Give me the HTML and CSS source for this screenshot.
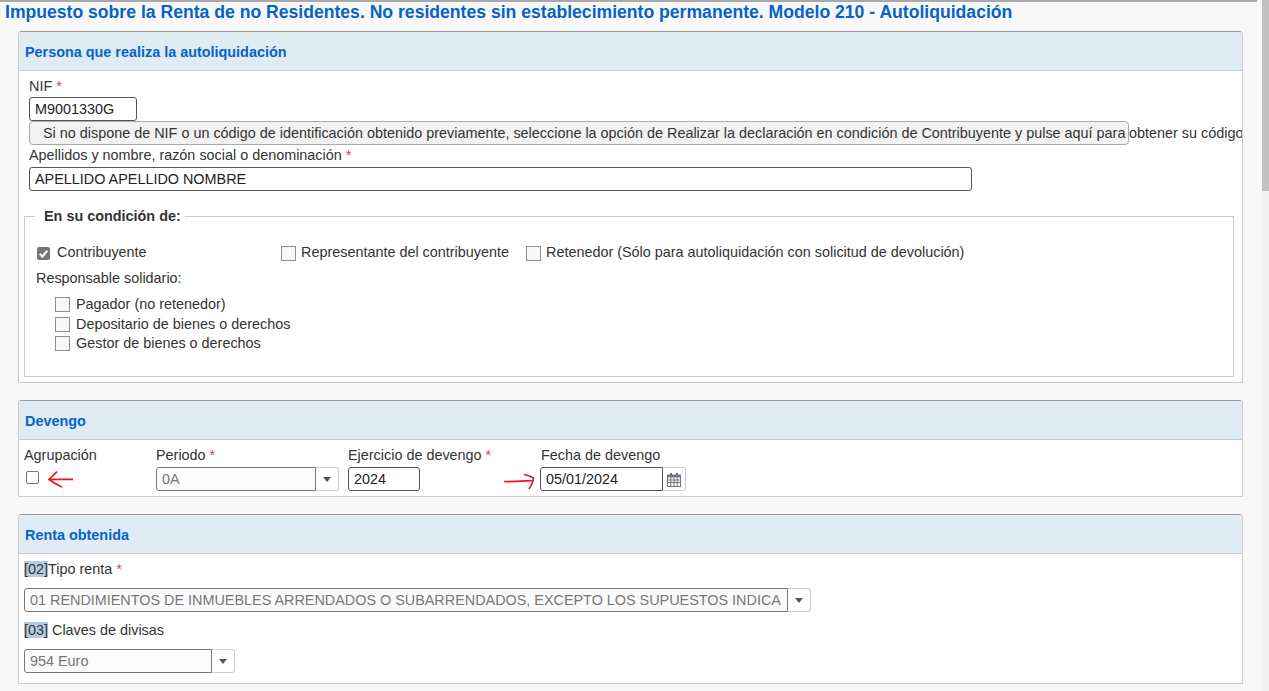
FILE: index.html
```html
<!DOCTYPE html>
<html lang="es">
<head>
  <meta charset="UTF-8">
  <title>Modelo 210 - Autoliquidación</title>
  <link rel="stylesheet" href="styles.css">
</head>
<body>
  <div class="page">
    <main class="content">
      <h1>Impuesto sobre la Renta de no Residentes. No residentes sin establecimiento permanente. Modelo 210 - Autoliquidación</h1>

      <!-- Persona -->
      <section class="panel panel-persona">
        <h2>Persona que realiza la autoliquidación</h2>
        <div class="panel-body body-persona">
          <label class="lbl">NIF <span class="req">*</span></label>
          <div class="text-input nif">M9001330G</div>
          <div class="nif-help">
            <button class="help-btn">Si no dispone de NIF o un código de identificación obtenido previamente, seleccione la opción de Realizar la declaración en condición de Contribuyente y pulse aquí para</button><span>obtener su código</span>
          </div>
          <label class="lbl lbl-name">Apellidos y nombre, razón social o denominación <span class="req">*</span></label>
          <div class="text-input name">APELLIDO APELLIDO NOMBRE</div>

          <fieldset class="condicion">
            <legend>En su condición de:</legend>
            <div class="cond-row">
              <span class="check-item item-contrib"><span class="cb cb-on"><svg viewBox="0 0 13 13" width="13" height="13"><path d="M2.8 6.8 5.4 9.6 10.2 3.6" fill="none" stroke="#fff" stroke-width="2.2"/></svg></span>Contribuyente</span>
              <span class="check-item item-repre"><span class="cb"></span>Representante del contribuyente</span>
              <span class="check-item"><span class="cb"></span>Retenedor (Sólo para autoliquidación con solicitud de devolución)</span>
            </div>
            <p class="resp">Responsable solidario:</p>
            <div class="resp-list">
              <span class="check-item"><span class="cb"></span>Pagador (no retenedor)</span>
              <span class="check-item"><span class="cb"></span>Depositario de bienes o derechos</span>
              <span class="check-item"><span class="cb"></span>Gestor de bienes o derechos</span>
            </div>
          </fieldset>
        </div>
      </section>

      <!-- Devengo -->
      <section class="panel panel-devengo">
        <h2>Devengo</h2>
        <div class="panel-body body-devengo">
          <div class="col col-agr">
            <label class="lbl">Agrupación</label>
            <div class="agr-row">
              <span class="cb-small"></span>
              <svg class="arrow-left" width="28" height="18" viewBox="0 0 28 18"><path d="M26 9.300C18 9.500 9 9.200 2 9.500M10 1.700 2 9.500C6 12 10 15 15 17" fill="none" stroke="#f5101a" stroke-width="1.700"/></svg>
            </div>
          </div>
          <div class="col col-periodo">
            <label class="lbl lbl-field">Periodo <span class="req">*</span></label>
            <div class="combo combo-periodo"><span class="combo-text">0A</span><span class="combo-btn"><i class="caret"></i></span></div>
          </div>
          <div class="col col-ejer">
            <label class="lbl lbl-field">Ejercicio de devengo <span class="req">*</span></label>
            <div class="text-input ejer">2024</div>
          </div>
          <svg class="arrow-right" width="32" height="20" viewBox="0 0 32 20"><path d="M1 10.500C10 10.800 20 10 30.500 9.500M21 3.500C25 4 28 5.500 30.500 7 30 12 28 15 26 18" fill="none" stroke="#f5101a" stroke-width="1.700"/></svg>
          <div class="col col-fecha">
            <label class="lbl lbl-field lbl-fecha">Fecha de devengo</label>
            <div class="date-group">
              <div class="text-input fecha">05/01/2024</div>
              <span class="cal-btn">
                <svg width="14" height="15" viewBox="0 0 14 15"><path d="M0 2.500h14v12.500H0z" fill="#6f7480"/><path d="M1 5.500h12v8.500H1z" fill="#fff"/><path d="M3 1h2v3H3zM9 1h2v3H9z" fill="#6f7480"/><path d="M1 8h12M1 10.500h12M3.800 5.500v9M7 5.500v9M10.200 5.500v9" stroke="#6f7480" fill="none"/></svg>
              </span>
            </div>
          </div>
        </div>
      </section>

      <!-- Renta -->
      <section class="panel panel-renta">
        <h2>Renta obtenida</h2>
        <div class="panel-body body-renta">
          <label class="lbl"><mark>[02]</mark>Tipo renta <span class="req">*</span></label>
          <div class="combo combo-tipo"><span class="combo-text">01 RENDIMIENTOS DE INMUEBLES ARRENDADOS O SUBARRENDADOS, EXCEPTO LOS SUPUESTOS INDICA</span><span class="combo-btn"><i class="caret"></i></span></div>
          <label class="lbl lbl-divisa"><mark>[03]</mark> Claves de divisas</label>
          <div class="combo combo-divisa"><span class="combo-text">954 Euro</span><span class="combo-btn"><i class="caret"></i></span></div>
        </div>
      </section>
    </main>
    <div class="scrollbar"><div class="thumb"></div></div>
  </div>
</body>
</html>
```
FILE: styles.css
```css
html, body {
  margin: 0;
  height: 691px;
  overflow: hidden;
}
body {
  font-family: "Liberation Sans", Arial, sans-serif;
  font-size: 14.4px;
  color: #333;
  background: #f8f8f8;
}
.page {
  display: flex;
  height: 691px;
}
.content {
  width: 1262px;
  flex: none;
}
.scrollbar {
  width: 7px;
  background: #f1f1f1;
}
.thumb {
  height: 191px;
  background: #c1c1c1;
}
h1 {
  margin: 0;
  height: 31px;
  width: 1257px;
  box-sizing: border-box;
  border-top: 2px solid #a9a9a9;
  padding-left: 5px;
  font-size: 17.6px;
  line-height: 21px;
  font-weight: bold;
  color: #0563c9;
  white-space: nowrap;
}

/* paneles */
.panel {
  width: 1225px;
  margin-left: 18px;
  box-sizing: border-box;
  background: #fff;
  border: 1px solid #ccc;
  border-top-color: #999;
  border-radius: 4px 4px 0 0;
  overflow: hidden;
}
.panel h2 {
  margin: 0;
  height: 39px;
  box-sizing: border-box;
  padding-left: 6px;
  background: #e0ecf4;
  border-bottom: 1px solid #ccc;
  font-size: 14.4px;
  line-height: 41px;
  color: #0563c9;
}
.panel-persona { height: 352px; }
.panel-devengo { height: 97px; margin-top: 17px; }
.panel-renta { height: 170px; margin-top: 17px; }
.panel-body { box-sizing: border-box; }
.body-persona { padding: 6px 0 0 10px; }

.lbl {
  display: block;
  line-height: 19px;
  color: #333;
}
.req { color: #d2444e; }
mark {
  background: #b5cde2;
  color: #333;
}

.text-input {
  box-sizing: border-box;
  height: 24px;
  border: 1px solid #555;
  border-radius: 3px;
  background: #fff;
  padding-left: 5px;
  line-height: 23px;
  color: #222;
}
.nif { width: 108px; margin-top: 1px; }
.name { width: 943px; }
.ejer { width: 72px; }
.fecha { width: 123px; border-radius: 3px 0 0 3px; }

.nif-help {
  display: flex;
  align-items: center;
  height: 24px;
  white-space: nowrap;
}
.help-btn {
  flex: none;
  width: 1100px;
  height: 24px;
  box-sizing: border-box;
  padding: 0 0 0 13px;
  overflow: hidden;
  white-space: nowrap;
  text-align: left;
  border: 1px solid #aaa;
  border-radius: 4px;
  background: #f2f2f2;
  font: inherit;
  color: #333;
}
.lbl-name { margin-top: 1px; margin-bottom: 2px; }

/* condicion */
.condicion {
  margin: 17px 0 0 -5px;
  width: 1210px;
  height: 169px;
  box-sizing: border-box;
  border: 1px solid #ccc;
  padding: 18px 0 0 11px;
}
.condicion legend {
  margin-left: -1px;
  padding: 0 4px 0 9px;
  font-weight: bold;
  color: #333;
  line-height: 17px;
}
.cond-row {
  display: flex;
  align-items: center;
  height: 20px;
}
.check-item {
  display: flex;
  align-items: center;
  gap: 5px;
  line-height: 19.500px;
}
.cb {
  flex: none;
  width: 15px;
  height: 15px;
  box-sizing: border-box;
  border: 1px solid #8f8f8f;
  background: #f8f8f8;
}
.cb-on {
  width: 13px;
  height: 13px;
  border: 0;
  border-radius: 2px;
  background: #767676;
  margin-right: 2px;
  margin-left: 1px;
}
.cb-on svg { display: block; }
.item-contrib { width: 245px; }
.item-repre { width: 245px; }
.resp {
  margin: 6px 0 0 0;
  line-height: 19px;
}
.resp-list {
  display: flex;
  flex-direction: column;
  margin: 7px 0 0 19px;
}
.resp-list .check-item { gap: 6px; }

/* devengo */
.body-devengo {
  display: flex;
  padding: 6px 0 0 5px;
}
.col { flex: none; }
.col-agr { width: 132px; }
.col-periodo { width: 192px; }
.col-ejer { width: 155px; }
.lbl-field { margin-bottom: 2px; }
.lbl-fecha { margin-left: 1px; }
.agr-row {
  display: flex;
  align-items: center;
  margin-top: 2px;
  padding-left: 2px;
}
.cb-small {
  width: 13px;
  height: 13px;
  box-sizing: border-box;
  border: 1px solid #767676;
  border-radius: 2px;
  background: #fff;
}
.arrow-left { margin: 3px 0 0 8px; }
.arrow-right {
  flex: none;
  margin: 25px 5px 0 0;
}
.date-group { display: flex; }
.cal-btn {
  box-sizing: border-box;
  width: 23px;
  height: 24px;
  border: 1px solid #ccc;
  border-left: 0;
  border-radius: 0 3px 3px 0;
  display: flex;
  align-items: center;
  justify-content: center;
}

/* combos */
.combo { display: flex; height: 24px; }
.combo-text {
  flex: 1;
  box-sizing: border-box;
  border: 1px solid #767676;
  border-radius: 3px 0 0 3px;
  background: #fbfbfb;
  padding-left: 5px;
  line-height: 23px;
  color: #777;
  white-space: nowrap;
  overflow: hidden;
}
.combo-btn {
  box-sizing: border-box;
  width: 23px;
  flex: none;
  border: 1px solid #ccc;
  border-left: 0;
  border-radius: 0 3px 3px 0;
  background: #fff;
  display: flex;
  align-items: center;
  justify-content: center;
}
.caret {
  display: block;
  margin-top: 1px;
  border-left: 4.500px solid transparent;
  border-right: 4.500px solid transparent;
  border-top: 5px solid #555;
}
.combo-periodo { width: 183px; }
.body-renta { padding: 6px 0 0 5px; }
.combo-tipo { width: 787px; margin-top: 9px; }
.lbl-divisa { margin-top: 9px; }
.combo-divisa { width: 211px; margin-top: 9px; }
```
